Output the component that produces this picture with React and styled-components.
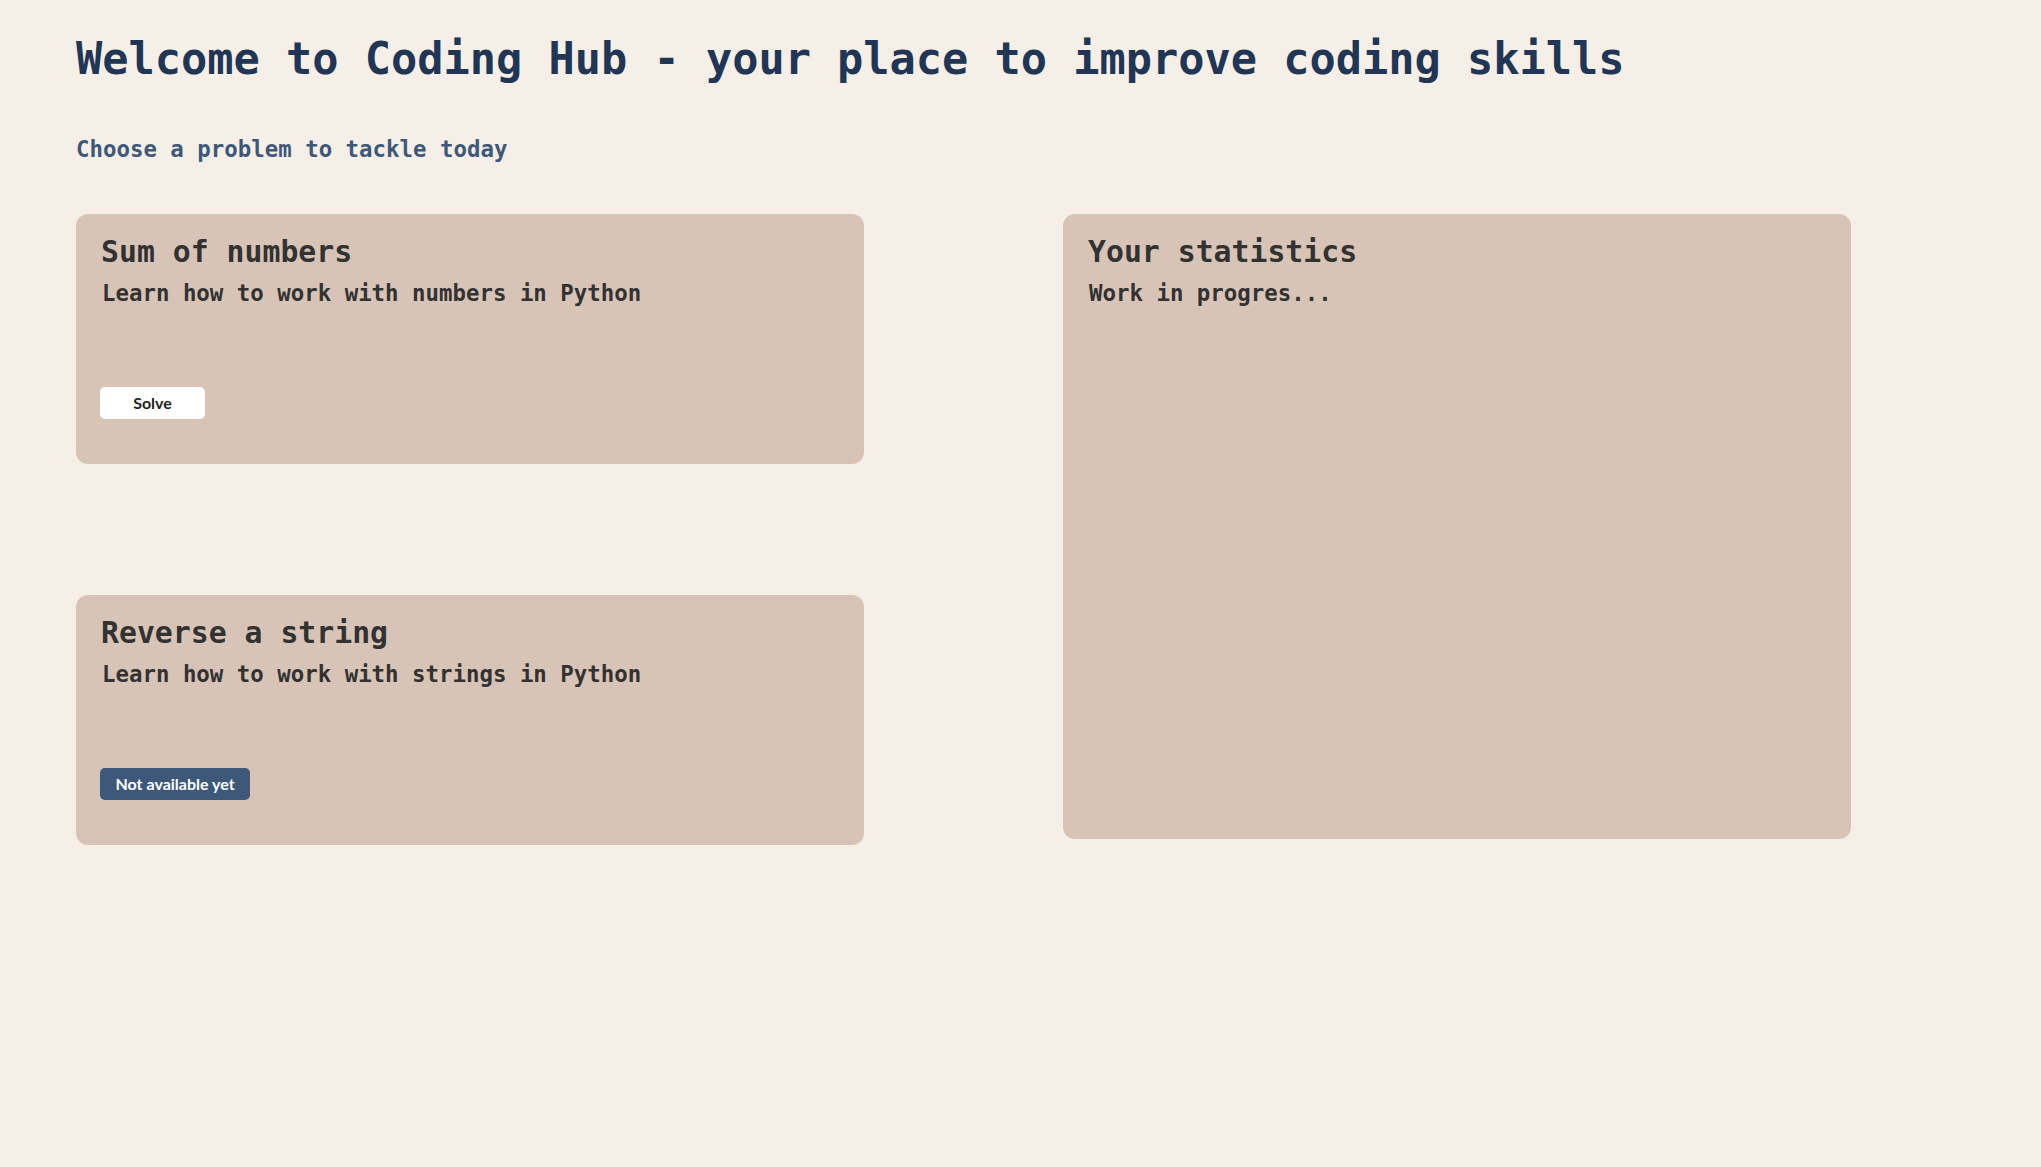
import React from 'react';
import styled, { createGlobalStyle } from 'styled-components';

const problems = [
  {
    title: 'Sum of numbers',
    text: 'Learn how to work with numbers in Python',
    available: true,
  },
  {
    title: 'Reverse a string',
    text: 'Learn how to work with strings in Python',
    available: false,
  },
];

function App() {
  return (
    <>
      <GlobalStyle />
      <Page>
        <Title>Welcome to Coding Hub - your place to improve coding skills</Title>
        <Subtitle>Choose a problem to tackle today</Subtitle>
        <Board>
          <ProblemList>
            {problems.map((p) => (
              <Card key={p.title}>
                <CardTitle>{p.title}</CardTitle>
                <CardText>{p.text}</CardText>
                {p.available ? (
                  <SolveButton>Solve</SolveButton>
                ) : (
                  <SolveButton disabled $muted>Not available yet</SolveButton>
                )}
              </Card>
            ))}
          </ProblemList>
          <StatsCard>
            <CardTitle>Your statistics</CardTitle>
            <CardText>Work in progres...</CardText>
          </StatsCard>
        </Board>
      </Page>
    </>
  );
}

const GlobalStyle = createGlobalStyle`
  body {
    margin: 0;
    background: #F5EFE7;
    font-family: "DejaVu Sans Mono", "Liberation Mono", monospace;
  }
`

const Page = styled.div`
  min-height: 1167px;
  box-sizing: border-box;
  padding: 33px 76px 0;
  background: #F5EFE7;
`

const Title = styled.h1`
  margin: 0;
  font-size: 43.6px;
  line-height: 52px;
  font-weight: bold;
  color: #213555;
`

const Subtitle = styled.h3`
  margin: 50px 0 0;
  font-size: 22.4px;
  line-height: 28px;
  font-weight: bold;
  color: #3E5879;
`

const Board = styled.div`
  display: grid;
  grid-template-columns: 788px 788px;
  column-gap: 199px;
  align-items: start;
  margin-top: 51px;
`

const ProblemList = styled.div`
  display: flex;
  flex-direction: column;
  gap: 131px;
`

const Card = styled.div`
  display: flex;
  flex-direction: column;
  align-items: flex-start;
  box-sizing: border-box;
  height: 250px;
  padding: 19.5px 25px 0;
  background: #D8C4B6;
  border-radius: 12px;
  color: #323232;
`

const StatsCard = styled(Card)`
  height: 625px;
`

const CardTitle = styled.h2`
  margin: 0;
  font-size: 29.8px;
  line-height: 36px;
  font-weight: bold;
`

const CardText = styled.p`
  margin: 9px 0 0 1px;
  font-size: 22.4px;
  line-height: 28px;
  font-weight: bold;
`

const SolveButton = styled.button`
  margin-top: 80px;
  margin-left: -1px;
  height: 32px;
  min-width: 105px;
  padding: 0 15.5px;
  border: none;
  border-radius: 5px;
  font-family: Lato, "Open Sans", sans-serif;
  font-size: 16px;
  font-weight: bold;
  background: ${props => props.$muted ? '#3E5879' : '#FFFFFF'};
  color: ${props => props.$muted ? '#FFFFFF' : '#1f1f1f'};
  cursor: ${props => props.$muted ? 'default' : 'pointer'};
`

export default App;
